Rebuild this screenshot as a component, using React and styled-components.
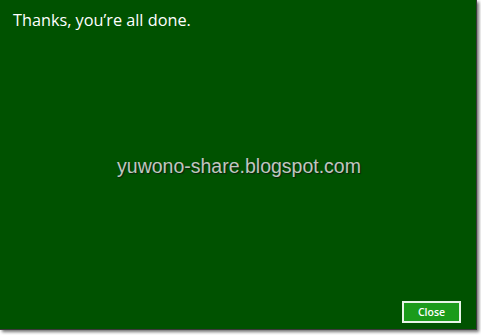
import React from 'react';
import styled, { createGlobalStyle } from 'styled-components';

const Global = createGlobalStyle`
  html, body {
    margin: 0;
    padding: 0;
    background: #ffffff;
  }
`;

const Frame = styled.div`
  width: 481px;
  height: 335px;
  box-sizing: border-box;
  padding: 0 4px 5px 0;
`;

const Panel = styled.div`
  height: 100%;
  box-sizing: border-box;
  background: #005200;
  border-right: 1px solid #3a3a3a;
  border-bottom: 1px solid #3a3a3a;
  box-shadow: 2px 2px 3px rgba(0, 0, 0, 0.55);
  display: flex;
  flex-direction: column;
`;

const Title = styled.h1`
  margin: 0;
  padding: 9px 0 0 13px;
  font-family: "Open Sans", "Noto Sans", sans-serif;
  font-weight: 400;
  font-size: 16.25px;
  line-height: 22px;
  color: #ffffff;
`;

const Middle = styled.div`
  flex: 1;
  display: flex;
  align-items: center;
  justify-content: center;
  padding-left: 2px;
`;

const Watermark = styled.span`
  font-family: "Liberation Sans", Arial, sans-serif;
  font-size: 19.5px;
  color: #c0c6c0;
  text-shadow: 1px 1px 1px #0c200c;
  margin-top: 0;
`;

const Footer = styled.div`
  display: flex;
  justify-content: flex-end;
  padding: 0 15px 6px 0;
`;

const Button = styled.button`
  width: 59px;
  height: 22px;
  box-sizing: border-box;
  background: #1b9b1b;
  border: 2px solid #e8f4e8;
  color: #ffffff;
  font-family: "Open Sans", "Noto Sans", sans-serif;
  font-weight: 600;
  font-size: 10.5px;
  padding: 0;
  cursor: pointer;
`;

export default function App() {
  return (
    <>
      <Global />
      <Frame>
        <Panel>
          <Title>Thanks, you’re all done.</Title>
          <Middle>
            <Watermark>yuwono-share.blogspot.com</Watermark>
          </Middle>
          <Footer>
            <Button>Close</Button>
          </Footer>
        </Panel>
      </Frame>
    </>
  );
}
